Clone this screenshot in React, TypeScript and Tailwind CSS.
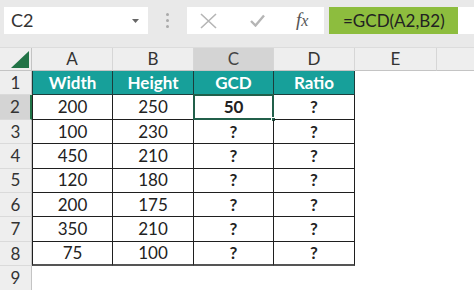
import React from 'react';

const rows = [
  ['200', '250', '50', '?'],
  ['100', '230', '?', '?'],
  ['450', '210', '?', '?'],
  ['120', '180', '?', '?'],
  ['200', '175', '?', '?'],
  ['350', '210', '?', '?'],
  ['75', '100', '?', '?'],
];

const letters = ['A', 'B', 'C', 'D', 'E', ''];

export default function App() {
  return (
    <div className="w-[474px] h-[290px] overflow-hidden bg-white text-[#222]" style={{ fontFamily: 'Lato, "Open Sans", sans-serif' }}>
      {/* formula bar */}
      <div className="h-12 bg-[#e9e9e9] flex items-start pt-[7px] pl-1 border-b border-[#dcdcdc]">
        <div className="w-[144px] h-[27px] bg-white flex items-center justify-between pl-[7px] pr-[9px]">
          <span className="text-[18px] text-[#333]">C2</span>
          <svg width="7" height="4" viewBox="0 0 7 4"><path d="M0 0h7L3.5 4z" fill="#666" /></svg>
        </div>
        <div className="w-[39px] h-[27px] flex flex-col items-center justify-center gap-[3px]">
          <span className="w-[3px] h-[3px] rounded-full bg-[#aaa]" />
          <span className="w-[3px] h-[3px] rounded-full bg-[#aaa]" />
          <span className="w-[3px] h-[3px] rounded-full bg-[#aaa]" />
        </div>
        <div className="w-[137px] h-[27px] bg-white flex items-center">
          <svg className="ml-[13px]" width="17" height="16" viewBox="0 0 17 16">
            <path d="M1 1L16 15M16 1L1 15" stroke="#b5b5b5" strokeWidth="1.6" />
          </svg>
          <svg className="ml-[33px]" width="15" height="13" viewBox="0 0 15 13">
            <path d="M1 7L5.5 11.5L14 1.5" stroke="#b5b5b5" strokeWidth="2.4" fill="none" />
          </svg>
          <span
            className="ml-[31px] text-[19px] italic text-[#555]"
            style={{ fontFamily: '"Liberation Serif", serif' }}
          >
            f<span className="text-[16px]">x</span>
          </span>
        </div>
        <div className="w-[5px]" />
        <div className="flex-1 h-[27px] bg-white flex">
          <div className="w-[129px] h-full bg-[#8dbd3e] flex items-center pl-[14px] text-[17px] text-[#222]">
            =GCD(A2,B2)
          </div>
        </div>
      </div>

      {/* sheet */}
      <div className="grid grid-cols-[32px_81px_81px_80px_81px_82px_1fr] grid-rows-[23px_repeat(9,24.375px)]">
        {/* corner */}
        <div className="bg-[#eeeeee] border-r border-b border-[#c4c4c4] flex items-end justify-end pr-[2px] pb-[2px]">
          <svg width="18" height="17" viewBox="0 0 18 17"><path d="M18 0V17H0z" fill="#217346" /></svg>
        </div>
        {letters.map((l, i) => (
          <div
            key={i}
            className={`flex items-center justify-center text-[17px] border-b border-[#c4c4c4] ${
              i === 5 ? '' : 'border-r border-r-[#d6d6d6]'
            } ${l === 'C' ? 'bg-[#d4d4d4] text-[#444]' : 'bg-[#eeeeee] text-[#333]'}`}
          >
            {l}
          </div>
        ))}

        {/* row 1 */}
        <div className="bg-[#eeeeee] border-r border-[#c4c4c4] border-b border-b-[#dadada] flex items-center justify-center text-[17px] text-[#333]">1</div>
        {['Width', 'Height', 'GCD', 'Ratio'].map((h, i) => (
          <div
            key={h}
            className={`bg-[#17a09a] text-white font-bold text-[17px] flex items-center justify-center border-r border-b border-[#1d3d3b] ${
              i === 0 ? 'border-l' : ''
            }`}
          >
            {h}
          </div>
        ))}
        <div />
        <div />

        {rows.map((r, ri) => (
          <React.Fragment key={ri}>
            <div
              className={`border-b border-b-[#dadada] flex items-center justify-center text-[17px] text-[#333] ${
                ri === 0 ? 'bg-[#d4d4d4] border-r-2 border-r-[#217346]' : 'bg-[#eeeeee] border-r border-r-[#c4c4c4]'
              }`}
            >
              {ri + 2}
            </div>
            {r.map((v, ci) => (
              <div
                key={ci}
                className={`relative flex items-center justify-center text-[17px] border-r border-b border-[#1f1f1f] ${
                  ci === 0 ? 'border-l' : ''
                } ${ri === rows.length - 1 ? 'border-b-2 border-b-[#555]' : ''} ${ci >= 2 ? 'font-bold' : ''}`}
              >
                {v}
                {ri === 0 && ci === 2 && (
                  <>
                    <div className="absolute -inset-px border-2 border-[#215f4a]" />
                    <div className="absolute -right-[3px] -bottom-[3px] w-[5px] h-[5px] bg-[#215f4a] border border-white" />
                  </>
                )}
              </div>
            ))}
            <div />
            <div />
          </React.Fragment>
        ))}

        {/* row 9 */}
        <div className="bg-[#eeeeee] border-r border-[#c4c4c4] flex items-center justify-center text-[17px] text-[#333]">9</div>
        <div className="col-span-6" />
      </div>
    </div>
  );
}
